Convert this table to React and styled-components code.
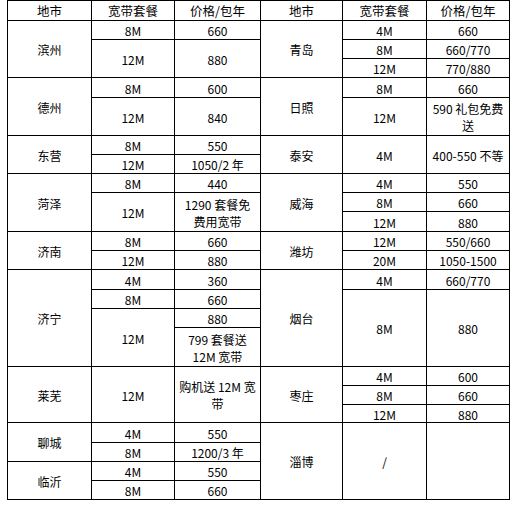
import React from "react";
import styled, { createGlobalStyle } from "styled-components";

const GlobalStyle = createGlobalStyle`
  html, body {
    margin: 0;
    padding: 0;
    background: #fff;
  }
`;

// row heights of the 25 body units (px, border included)
const unitHeights = [19, 19, 19, 20, 19, 19, 19, 19, 19, 19, 20, 19, 19, 20, 19, 19, 19, 20, 19, 19, 18, 20, 19, 19, 19];

const leftSide = [
  { city: "滨州", plans: [["8M", 1], ["12M", 2]], prices: [["660", 1], ["880", 2]] },
  { city: "德州", plans: [["8M", 1], ["12M", 2]], prices: [["600", 1], ["840", 2]] },
  { city: "东营", plans: [["8M", 1], ["12M", 1]], prices: [["550", 1], ["1050/2 年", 1]] },
  { city: "菏泽", plans: [["8M", 1], ["12M", 2]], prices: [["440", 1], ["1290 套餐免\n费用宽带", 2]] },
  { city: "济南", plans: [["8M", 1], ["12M", 1]], prices: [["660", 1], ["880", 1]] },
  { city: "济宁", plans: [["4M", 1], ["8M", 1], ["12M", 3]], prices: [["360", 1], ["660", 1], ["880", 1], ["799 套餐送\n12M 宽带", 2]] },
  { city: "莱芜", plans: [["12M", 3]], prices: [["购机送 12M 宽\n带", 3]] },
  { city: "聊城", plans: [["4M", 1], ["8M", 1]], prices: [["550", 1], ["1200/3 年", 1]] },
  { city: "临沂", plans: [["4M", 1], ["8M", 1]], prices: [["550", 1], ["660", 1]] },
];

const rightSide = [
  { city: "青岛", plans: [["4M", 1], ["8M", 1], ["12M", 1]], prices: [["660", 1], ["660/770", 1], ["770/880", 1]] },
  { city: "日照", plans: [["8M", 1], ["12M", 2]], prices: [["660", 1], ["590 礼包免费\n送", 2]] },
  { city: "泰安", plans: [["4M", 2]], prices: [["400-550 不等", 2]] },
  { city: "威海", plans: [["4M", 1], ["8M", 1], ["12M", 1]], prices: [["550", 1], ["660", 1], ["880", 1]] },
  { city: "潍坊", plans: [["12M", 1], ["20M", 1]], prices: [["550/660", 1], ["1050-1500", 1]] },
  { city: "烟台", plans: [["4M", 1], ["8M", 4]], prices: [["660/770", 1], ["880", 4]] },
  { city: "枣庄", plans: [["4M", 1], ["8M", 1], ["12M", 1]], prices: [["600", 1], ["660", 1], ["880", 1]] },
  { city: "淄博", plans: [["/", 4]], prices: [["", 4]] },
];

const headers = ["地市", "宽带套餐", "价格/包年"];

const Table = styled.div`
  display: grid;
  grid-template-columns: 84px 83px 86px 82px 84px 83px;
  grid-template-rows: 20px ${unitHeights.map((h) => `${h}px`).join(" ")};
  width: max-content;
  margin: 0 0 0 7px;
  border-top: 1px solid #000;
  border-left: 1px solid #000;
  font-family: "Noto Sans CJK SC", "Liberation Sans", sans-serif;
  font-size: 12px;
  color: #000;
  background: #fff;
`;

const Cell = styled.div`
  grid-column: ${(p) => p.$col};
  grid-row: ${(p) => p.$row} / span ${(p) => p.$span};
  box-sizing: border-box;
  border-right: 1px solid #000;
  border-bottom: 1px solid #000;
  display: flex;
  align-items: center;
  justify-content: center;
  text-align: center;
  white-space: pre-line;
  line-height: 17px;
  padding-top: 1px;
`;

const HeadCell = styled(Cell)`
  font-size: 12.5px;
  line-height: 1;
`;

function buildSide(side, firstCol) {
  const cells = [];
  let row = 2;
  side.forEach((group) => {
    const total = group.plans.reduce((s, [, n]) => s + n, 0);
    cells.push(
      <Cell key={`${group.city}-c`} $col={firstCol} $row={row} $span={total}>
        {group.city}
      </Cell>
    );
    let r = row;
    group.plans.forEach(([name, n], i) => {
      cells.push(
        <Cell key={`${group.city}-p${i}`} $col={firstCol + 1} $row={r} $span={n}>
          {name}
        </Cell>
      );
      r += n;
    });
    r = row;
    group.prices.forEach(([text, n], i) => {
      cells.push(
        <Cell key={`${group.city}-v${i}`} $col={firstCol + 2} $row={r} $span={n}>
          {text}
        </Cell>
      );
      r += n;
    });
    row += total;
  });
  return cells;
}

export default function App() {
  return (
    <>
      <GlobalStyle />
      <Table>
        {[...headers, ...headers].map((h, i) => (
          <HeadCell key={`h${i}`} $col={i + 1} $row={1} $span={1}>
            {h}
          </HeadCell>
        ))}
        {buildSide(leftSide, 1)}
        {buildSide(rightSide, 4)}
      </Table>
    </>
  );
}
